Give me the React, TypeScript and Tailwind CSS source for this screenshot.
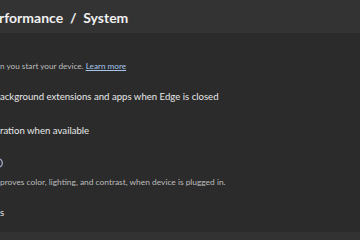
export default function App() {
  return (
    <div className="w-[360px] h-[240px] overflow-hidden bg-[#2b2b2b] flex flex-col" style={{ fontFamily: 'Lato, "Open Sans", sans-serif' }}>
      <div className="h-[33px] bg-[#333333] flex items-center shrink-0">
        <h1 className="text-[14px] font-bold text-[#f0f0f0] whitespace-nowrap -ml-[1px] pt-[2px]">rformance &nbsp;/&nbsp; System</h1>
      </div>
      <div className="flex-1 flex flex-col overflow-hidden">
        <p className="mt-[27px] text-[8.2px] text-[#bdbdbd] whitespace-nowrap">
          n you start your device.{' '}
          <a href="#" className="text-[#a7c6ec] underline">Learn more</a>
        </p>
        <p className="mt-[18px] text-[9.6px] text-[#e8e8e8] whitespace-nowrap">ackground extensions and apps when Edge is closed</p>
        <p className="mt-[19px] text-[9.6px] text-[#e8e8e8] whitespace-nowrap">ration when available</p>
        <div className="mt-[20px] h-[10px] -ml-[7px]">
          <svg width="12" height="10" viewBox="0 0 12 10">
            <circle cx="5" cy="5" r="4.3" fill="none" stroke="#a9b4d8" strokeWidth="1.2" />
          </svg>
        </div>
        <p className="mt-[8px] text-[8.4px] text-[#bdbdbd] whitespace-nowrap">proves color, lighting, and contrast, when device is plugged in.</p>
        <p className="mt-[17px] text-[9.6px] text-[#e8e8e8] whitespace-nowrap">s</p>
      </div>
      <div className="h-[8px] bg-[#323232] shrink-0" />
    </div>
  );
}
